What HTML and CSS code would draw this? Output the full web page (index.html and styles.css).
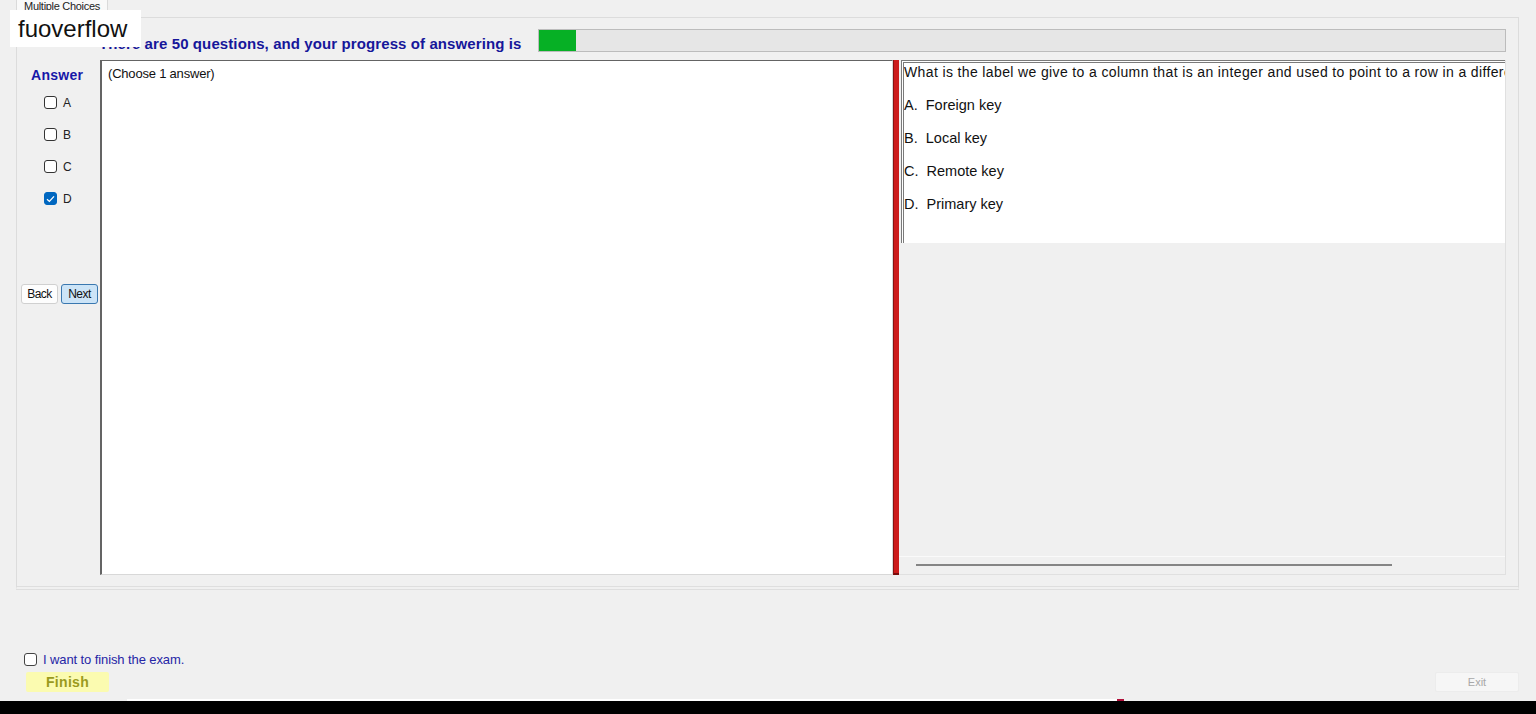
FILE: index.html
```html
<!DOCTYPE html>
<html lang="en">
<head>
    <meta charset="UTF-8">
    <title>Multiple Choices</title>
    <link rel="stylesheet" href="styles.css">
</head>
<body>

<div class="watermark">fuoverflow</div>

<div class="tab-strip">
    <div class="tab">Multiple Choices</div>
</div>

<div class="panel">
    <div class="header">
        <div class="title">There are 50 questions, and your progress of answering is</div>
        <div class="progress"><div class="progress-fill"></div></div>
    </div>

    <div class="body">
        <div class="side">
            <div class="answer-title">Answer</div>
            <div class="choices">
                <label class="choice"><span class="box"></span>A</label>
                <label class="choice"><span class="box"></span>B</label>
                <label class="choice"><span class="box"></span>C</label>
                <label class="choice"><span class="box checked"><svg width="9" height="8" viewBox="0 0 9 8"><path d="M1 4.2 L3.4 6.4 L8 1.4" fill="none" stroke="#fff" stroke-width="1.3"/></svg></span>D</label>
            </div>
            <div class="nav">
                <button class="btn">Back</button>
                <button class="btn btn-active">Next</button>
            </div>
        </div>

        <div class="answer-box">(Choose 1 answer)</div>

        <div class="splitter"></div>

        <div class="right">
            <div class="question">
                <p class="q-text">What is the label we give to a column that is an integer and used to point to a row in a different table?</p>
                <p class="option">A.&nbsp; Foreign key</p>
                <p class="option">B.&nbsp; Local key</p>
                <p class="option">C.&nbsp; Remote key</p>
                <p class="option">D.&nbsp; Primary key</p>
            </div>
            <div class="gray-area"></div>
            <div class="hscroll"><div class="hthumb"></div></div>
        </div>
    </div>
</div>

<div class="footer">
    <label class="finish-check"><span class="box"></span>I want to finish the exam.</label>
    <div class="footer-row">
        <button class="finish">Finish</button>
        <button class="exit">Exit</button>
    </div>
</div>

<div class="seek"><div class="seek-played"></div><div class="seek-head"></div></div>
<div class="player"></div>

</body>
</html>
```

FILE: styles.css
```css
* {
    box-sizing: border-box;
    margin: 0;
    padding: 0;
}
body {
    font-family: "Liberation Sans", Arial, sans-serif;
    background-color: #f0f0f0;
    width: 1536px;
    height: 714px;
    overflow: hidden;
    position: relative;
    color: #000;
}
.watermark {
    position: absolute;
    left: 10px;
    top: 10px;
    width: 131px;
    height: 37px;
    background-color: #fff;
    font-size: 24px;
    line-height: 37px;
    padding-left: 8px;
    color: #111;
    z-index: 2;
}
.tab-strip {
    height: 17px;
    padding-left: 16px;
}
.tab {
    width: 92px;
    height: 17px;
    background-color: #f9f9f9;
    border: 1px solid #dadada;
    border-top: none;
    border-bottom: none;
    font-size: 11px;
    line-height: 12px;
    text-align: center;
    letter-spacing: -0.3px;
    color: #222;
}
.panel {
    margin-left: 16px;
    width: 1503px;
    height: 573px;
    border: 1px solid #dcdcdc;
    border-bottom: 4px double #dedede;
    background-color: #f0f0f0;
    padding-top: 11px;
}
.header {
    display: flex;
    height: 23px;
}
.title {
    padding-left: 82px;
    padding-top: 6px;
    width: 521px;
    font-size: 15px;
    font-weight: bold;
    letter-spacing: 0.1px;
    color: #16169a;
    white-space: nowrap;
}
.progress {
    width: 968px;
    height: 23px;
    border: 1px solid #bcbcbc;
    background-color: #e6e6e6;
}
.progress-fill {
    width: 37px;
    height: 100%;
    background-color: #06b025;
}
.body {
    display: flex;
    margin-top: 8px;
    height: 515px;
}
.side {
    width: 83px;
    display: flex;
    flex-direction: column;
}
.answer-title {
    padding-left: 14px;
    padding-top: 7px;
    font-size: 14px;
    font-weight: bold;
    color: #1717a8;
    letter-spacing: 0.3px;
}
.choices {
    padding-left: 27px;
    padding-top: 13px;
    display: flex;
    flex-direction: column;
    gap: 19px;
}
.choice {
    display: flex;
    align-items: center;
    height: 13px;
    font-size: 12px;
    color: #222;
}
.box {
    width: 13px;
    height: 13px;
    border: 1px solid #333;
    border-radius: 3px;
    background-color: #fff;
    margin-right: 6px;
    display: flex;
    align-items: center;
    justify-content: center;
}
.box.checked {
    background-color: #0067c0;
    border-color: #0067c0;
}
.nav {
    display: flex;
    gap: 3px;
    padding-left: 4px;
    margin-top: 79px;
}
.btn {
    width: 37px;
    height: 20px;
    font-family: "Liberation Sans", Arial, sans-serif;
    font-size: 12px;
    letter-spacing: -0.5px;
    border: 1px solid #d0d0d0;
    border-radius: 3px;
    background-color: #fdfdfd;
    color: #111;
}
.btn-active {
    background-color: #cce4f7;
    border-color: #3a78b0;
}
.answer-box {
    width: 793px;
    height: 515px;
    background-color: #fff;
    border: 1px solid #d8d8d8;
    border-top-color: #646464;
    border-left: 2px solid #646464;
    padding: 5px 6px;
    font-size: 13px;
    letter-spacing: -0.2px;
    color: #111;
}
.splitter {
    width: 6px;
    height: 515px;
    background-color: #cc1b1b;
    border-left: 1px solid #8a1010;
    border-bottom: 2px solid #7a0c0c;
}
.right {
    width: 607px;
    height: 515px;
    display: flex;
    flex-direction: column;
    border-right: 1px solid #e0e0e0;
    border-bottom: 1px solid #e0e0e0;
}
.question {
    height: 183px;
    margin-left: 2px;
    background-color: #fff;
    border-top: 3px double #7a7a7a;
    border-left: 3px double #7a7a7a;
    padding: 1px 0 0 0;
    overflow: hidden;
    color: #111;
}
.q-text {
    font-size: 14px;
    line-height: 16px;
    white-space: nowrap;
    letter-spacing: 0.37px;
}
.option {
    font-size: 14.5px;
    line-height: 16px;
    margin-top: 17px;
}
.gray-area {
    flex: 1;
    border-bottom: 1px solid #fafafa;
}
.hscroll {
    height: 17px;
    padding: 7px 0 0 17px;
}
.hthumb {
    width: 476px;
    height: 2px;
    background-color: #858585;
}
.footer {
    margin-top: 62px;
    padding-left: 24px;
    padding-right: 17px;
}
.finish-check {
    display: flex;
    align-items: center;
    height: 14px;
    font-size: 13px;
    letter-spacing: -0.1px;
    color: #2626a6;
}
.finish-check .box {
    border-color: #444;
}
.footer-row {
    display: flex;
    justify-content: space-between;
    margin-top: 6px;
}
.finish {
    margin-left: 2px;
    width: 83px;
    height: 20px;
    border: none;
    border-radius: 2px;
    background-color: #fbfbb0;
    font-family: "Liberation Sans", Arial, sans-serif;
    font-size: 14px;
    font-weight: bold;
    letter-spacing: 0.3px;
    color: #9a9a1e;
}
.exit {
    width: 84px;
    height: 20px;
    border: 1px solid #ececec;
    border-radius: 2px;
    background-color: #f6f6f6;
    font-family: "Liberation Sans", Arial, sans-serif;
    font-size: 11px;
    color: #a8a8a8;
}
.seek {
    display: flex;
    height: 2px;
    margin-top: 7px;
    padding-left: 127px;
}
.seek-played {
    width: 990px;
    background-color: #fff;
}
.seek-head {
    width: 7px;
    background-color: #b0103a;
}
.player {
    height: 13px;
    background-color: #000;
}
```
